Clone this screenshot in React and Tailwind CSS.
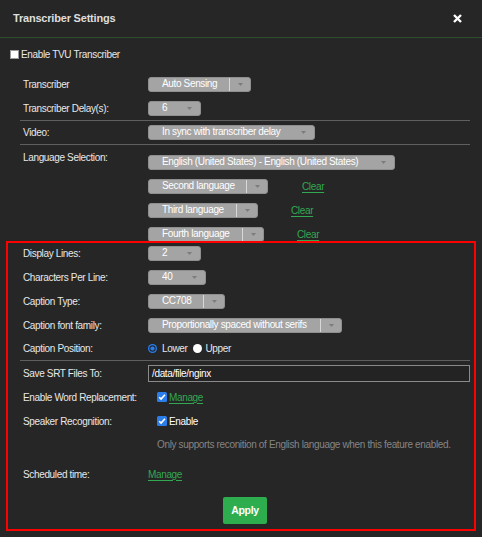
import React from 'react';

const Caret = () => (
  <svg width="5" height="3" viewBox="0 0 5 3">
    <path d="M0 0h5L2.5 3z" fill="#7c7c7c" />
  </svg>
);

const Select = ({ w, value, divider }) => (
  <div className={`flex h-[15px] ${w} shrink-0 rounded-[3px] border border-[#8f8f8f] bg-[#a4a4a4]`}>
    <div className="flex-1 truncate pl-[13px] leading-[12px] text-white">{value}</div>
    <div
      className={`flex w-[21px] items-center justify-center ${divider ? 'border-l border-[#d8d8d8]' : ''}`}
    >
      <Caret />
    </div>
  </div>
);

const Row = ({ label, h = 'h-[24px]', children }) => (
  <div className={`flex ${h} items-center`}>
    <div className="w-[128px] shrink-0 pl-[3px]">{label}</div>
    <div className="flex items-center">{children}</div>
  </div>
);

const Link = ({ children, className = '' }) => (
  <span className={`text-[#33a852] underline underline-offset-2 ${className}`}>{children}</span>
);

const Checked = () => (
  <svg width="10" height="10" viewBox="0 0 10 10">
    <rect x="0" y="0" width="10" height="10" rx="1.5" fill="#2b7de9" />
    <path d="M2.2 5.2l1.9 1.9 3.8-4.4" stroke="#fff" strokeWidth="1.6" fill="none" />
  </svg>
);

const Radio = ({ on }) => (
  <svg width="9" height="9" viewBox="0 0 9 9">
    {on ? (
      <>
        <circle cx="4.5" cy="4.5" r="4.5" fill="#2b7de9" />
        <circle cx="4.5" cy="4.5" r="3.2" fill="#1c2a3c" />
        <circle cx="4.5" cy="4.5" r="2.1" fill="#2b7de9" />
      </>
    ) : (
      <circle cx="4.5" cy="4.5" r="4.5" fill="#ffffff" />
    )}
  </svg>
);

const Line = () => <div className="h-[1px] bg-[#5f5f5f]" />;

export default function App() {
  return (
    <div className="relative h-[537px] w-[482px] overflow-hidden bg-[#262626] font-['Liberation_Sans',Arial,sans-serif] text-[10px] tracking-[-0.35px] text-[#e8e8e8]">
      <div className="flex h-[37px] items-center justify-between pl-[13px] pr-[20px]">
        <span className="text-[11px] font-bold tracking-[-0.2px] text-[#dedede]">Transcriber Settings</span>
        <svg width="9" height="9" viewBox="0 0 9 9">
          <path d="M1 1l7 7M8 1l-7 7" stroke="#fff" strokeWidth="2.4" />
        </svg>
      </div>
      <div className="h-[1px] bg-[#2d4d2d]" />

      <div className="mt-[4px] flex h-[24px] items-center pl-[10px]">
        <div className="h-[9px] w-[9px] border border-[#9a9a9a] bg-white" />
        <span className="ml-[2px]">Enable TVU Transcriber</span>
      </div>

      <div className="mt-[6px] pl-[20px] pr-[12px]">
        <Row label="Transcriber">
          <Select w="w-[103px]" value="Auto Sensing" divider />
        </Row>
        <Row label="Transcriber Delay(s):">
          <Select w="w-[53px]" value="6" />
        </Row>
        <Line />
        <Row label="Video:" h="h-[23px]">
          <Select w="w-[167px]" value="In sync with transcriber delay" />
        </Row>
        <Line />
        <div className="flex h-[96px]">
          <div className="flex h-[24px] w-[128px] shrink-0 items-center pl-[3px]">Language Selection:</div>
          <div className="flex flex-col gap-[9px] pt-[10px]">
            <Select w="w-[247px]" value="English (United States) - English (United States)" />
            <div className="flex items-center">
              <Select w="w-[120px]" value="Second language" divider />
              <Link className="ml-[34px]">Clear</Link>
            </div>
            <div className="flex items-center">
              <Select w="w-[110px]" value="Third language" divider />
              <Link className="ml-[33px]">Clear</Link>
            </div>
            <div className="flex items-center">
              <Select w="w-[116px]" value="Fourth language" divider />
              <Link className="ml-[33px]">Clear</Link>
            </div>
          </div>
        </div>
        <Row label="Display Lines:">
          <Select w="w-[53px]" value="2" />
        </Row>
        <Row label="Characters Per Line:">
          <Select w="w-[58px]" value="40" />
        </Row>
        <Row label="Caption Type:">
          <Select w="w-[77px]" value="CC708" divider />
        </Row>
        <Row label="Caption font family:">
          <Select w="w-[194px]" value="Proportionally spaced without serifs" divider />
        </Row>
        <Row label="Caption Position:" h="h-[23px]">
          <Radio on />
          <span className="ml-[5px]">Lower</span>
          <span className="ml-[5px]">
            <Radio />
          </span>
          <span className="ml-[4px]">Upper</span>
        </Row>
        <Line />
        <div className="flex h-[24px] items-center">
          <div className="w-[128px] shrink-0 pl-[3px]">Save SRT Files To:</div>
          <div className="flex h-[17px] flex-1 items-center border border-[#8a8a8a] bg-[#232323] pl-[3px] text-white">
            /data/file/nginx
          </div>
        </div>
        <Row label="Enable Word Replacement:">
          <span className="ml-[9px] flex">
            <Checked />
          </span>
          <Link className="ml-[2px]">Manage</Link>
        </Row>
        <Row label="Speaker Recognition:">
          <span className="ml-[9px] flex">
            <Checked />
          </span>
          <span className="ml-[2px] text-white">Enable</span>
        </Row>
        <div className="flex h-[22px] items-center pl-[137px] text-[#858585]">
          Only supports reconition of English language when this feature enabled.
        </div>
        <div className="mt-[7px]">
          <Row label="Scheduled time:">
            <Link>Manage</Link>
          </Row>
        </div>
        <div className="mt-[11px] flex justify-center">
          <button className="h-[27px] w-[44px] rounded-[2px] bg-[#2ead4f] text-[10.5px] font-bold text-white">
            Apply
          </button>
        </div>
      </div>

      <div className="pointer-events-none absolute left-[6px] top-[241px] h-[290px] w-[470px] border-2 border-[#ff0000]" />
    </div>
  );
}
